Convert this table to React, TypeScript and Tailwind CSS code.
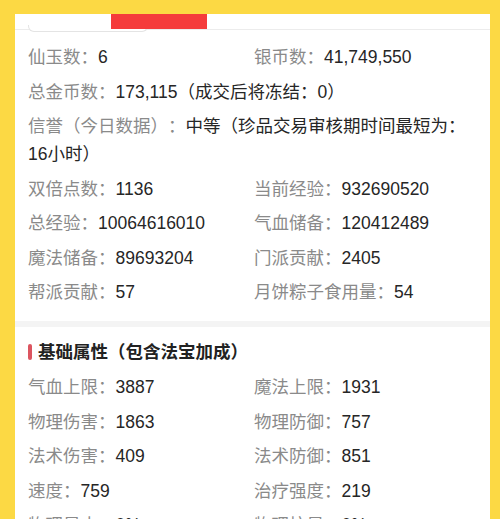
import React from "react";

const font = { fontFamily: '"Liberation Sans", "Noto Sans CJK SC", sans-serif' };

function Item({ label, value }: { label: string; value: string }) {
  return (
    <div className="whitespace-nowrap">
      <span className="text-[#8a8a8a]">{label}：</span>
      <span className="text-[#262626]">{value}</span>
    </div>
  );
}

function Grid({ items }: { items: [string, string][] }) {
  return (
    <div className="grid grid-cols-[226px_1fr] gap-y-[6.5px]">
      {items.map(([l, v]) => (
        <Item key={l} label={l} value={v} />
      ))}
    </div>
  );
}

export default function App() {
  return (
    <div
      className="w-[500px] h-[519px] bg-[#fcd944] overflow-hidden pt-[14px] pl-[15px] pr-[10px] text-[17.5px] leading-[28px] [text-spacing-trim:space-all]"
      style={font}
    >
      <div className="bg-white h-[600px]">
        <div className="relative h-[16px] border-b border-[#ececec]">
          <div className="absolute left-[13px] top-[11px] w-[120px] h-[7px] rounded-b-[6px] border border-t-0 border-[#e4e4e4] bg-white" />
          <div className="absolute left-[96px] top-0 w-[96px] h-[15px] bg-[#f53b3b]" />
        </div>
        <div className="px-[13px] pt-[13px] pb-[15px] flex flex-col gap-[6.5px]">
          <Grid
            items={[
              ["仙玉数", "6"],
              ["银币数", "41,749,550"],
            ]}
          />
          <Item label="总金币数" value="173,115（成交后将冻结：0）" />
          <div>
            <span className="text-[#8a8a8a]">信誉（今日数据）：</span>
            <span className="text-[#262626]">中等（珍品交易审核期时间最短为：16小时）</span>
          </div>
          <Grid
            items={[
              ["双倍点数", "1136"],
              ["当前经验", "932690520"],
              ["总经验", "10064616010"],
              ["气血储备", "120412489"],
              ["魔法储备", "89693204"],
              ["门派贡献", "2405"],
              ["帮派贡献", "57"],
              ["月饼粽子食用量", "54"],
            ]}
          />
        </div>
        <div className="h-[6px] bg-[#f4f4f4]" />
        <div className="px-[13px] pt-[11px] flex flex-col gap-[7px]">
          <div className="flex items-center">
            <div className="w-[4px] h-[16px] rounded-[2px] bg-[#dc5560] mr-[6px]" />
            <span className="font-bold text-[#222]">基础属性（包含法宝加成）</span>
          </div>
          <Grid
            items={[
              ["气血上限", "3887"],
              ["魔法上限", "1931"],
              ["物理伤害", "1863"],
              ["物理防御", "757"],
              ["法术伤害", "409"],
              ["法术防御", "851"],
              ["速度", "759"],
              ["治疗强度", "219"],
              ["物理暴击", "0%"],
              ["物理抗暴", "0%"],
            ]}
          />
        </div>
      </div>
    </div>
  );
}
